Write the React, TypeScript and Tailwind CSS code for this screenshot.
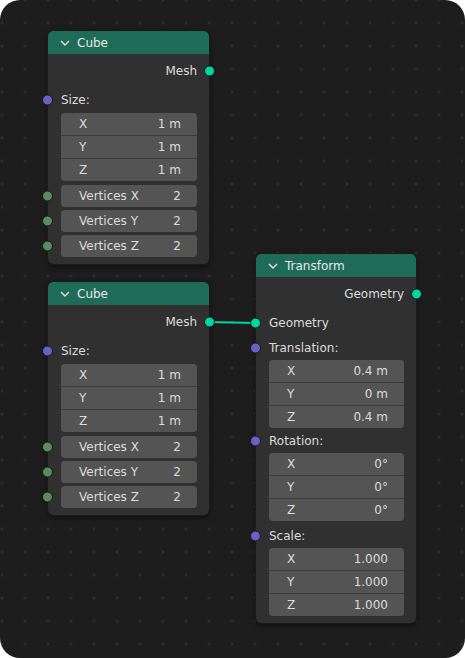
import React from "react";

type Row = { label: string; value: string };

const SOCKET = {
    geo: "bg-[#00d6a3]",
    vec: "bg-[#6363c7]",
    int: "bg-[#598c5c]",
};

const Socket: React.FC<{ color: string; side: "left" | "right" }> = ({ color, side }) => (
    <span
        className={`absolute top-1/2 -translate-y-1/2 w-[11px] h-[11px] rounded-full border border-[#1a1a1a] ${color} ${
            side === "left" ? "left-[-6px]" : "right-[-6px]"
        }`}
    />
);

const Header: React.FC<{ title: string }> = ({ title }) => (
    <div className="h-[23px] bg-[#1e6c58] rounded-t-[5px] flex items-center pl-[12px] gap-[7px] text-[12px] text-[#e8e8e8]">
        <svg width="10" height="8" viewBox="0 0 10 8">
            <path d="M1 2 L5 6 L9 2" stroke="#e0e0e0" strokeWidth="1.4" fill="none" />
        </svg>
        <span>{title}</span>
    </div>
);

const OutputRow: React.FC<{ label: string; color: string; className?: string }> = ({ label, color, className }) => (
    <div className={`relative h-[22px] flex items-center justify-end pr-[12px] ${className ?? ""}`}>
        <span>{label}</span>
        <Socket color={color} side="right" />
    </div>
);

const InputLabel: React.FC<{ label: string; color: string; className?: string }> = ({ label, color, className }) => (
    <div className={`relative h-[22px] flex items-center pl-[13px] ${className ?? ""}`}>
        <span>{label}</span>
        <Socket color={color} side="left" />
    </div>
);

const VectorBox: React.FC<{ rows: Row[]; className?: string }> = ({ rows, className }) => (
    <div className={`ml-[13px] mr-[12px] rounded-[4px] overflow-hidden bg-[#3d3d3d] flex flex-col gap-[1px] ${className ?? ""}`}>
        {rows.map((r) => (
            <div key={r.label} className="h-[22px] bg-[#545454] flex items-center justify-between pl-[18px] pr-[16px]">
                <span>{r.label}</span>
                <span>{r.value}</span>
            </div>
        ))}
    </div>
);

const IntField: React.FC<{ label: string; value: string; className?: string }> = ({ label, value, className }) => (
    <div className={`relative h-[22px] pl-[13px] pr-[12px] ${className ?? ""}`}>
        <Socket color={SOCKET.int} side="left" />
        <div className="h-full rounded-[4px] bg-[#545454] flex items-center justify-between pl-[18px] pr-[16px]">
            <span>{label}</span>
            <span>{value}</span>
        </div>
    </div>
);

const CubeNode: React.FC<{ className: string }> = ({ className }) => (
    <div className={`absolute w-[161px] rounded-[5px] bg-[#303030] shadow-[0_2px_6px_rgba(0,0,0,0.6)] outline outline-1 outline-[#1a1a1a] ${className}`}>
        <Header title="Cube" />
        <div className="flex flex-col pb-[7px]">
            <OutputRow label="Mesh" color={SOCKET.geo} className="mt-[6px]" />
            <InputLabel label="Size:" color={SOCKET.vec} className="mt-[7px]" />
            <VectorBox
                className="mt-[2px]"
                rows={[
                    { label: "X", value: "1 m" },
                    { label: "Y", value: "1 m" },
                    { label: "Z", value: "1 m" },
                ]}
            />
            <IntField label="Vertices X" value="2" className="mt-[4px]" />
            <IntField label="Vertices Y" value="2" className="mt-[3px]" />
            <IntField label="Vertices Z" value="2" className="mt-[3px]" />
        </div>
    </div>
);

const TransformNode: React.FC = () => (
    <div className="absolute left-[256px] top-[254px] w-[160px] rounded-[5px] bg-[#303030] shadow-[0_2px_6px_rgba(0,0,0,0.6)] outline outline-1 outline-[#1a1a1a]">
        <Header title="Transform" />
        <div className="flex flex-col pb-[7px]">
            <OutputRow label="Geometry" color={SOCKET.geo} className="mt-[6px]" />
            <InputLabel label="Geometry" color={SOCKET.geo} className="mt-[7px]" />
            <InputLabel label="Translation:" color={SOCKET.vec} className="mt-[3px]" />
            <VectorBox
                className="mt-[1px]"
                rows={[
                    { label: "X", value: "0.4 m" },
                    { label: "Y", value: "0 m" },
                    { label: "Z", value: "0.4 m" },
                ]}
            />
            <InputLabel label="Rotation:" color={SOCKET.vec} className="mt-[2px]" />
            <VectorBox
                className="mt-[1px]"
                rows={[
                    { label: "X", value: "0°" },
                    { label: "Y", value: "0°" },
                    { label: "Z", value: "0°" },
                ]}
            />
            <InputLabel label="Scale:" color={SOCKET.vec} className="mt-[4px]" />
            <VectorBox
                className="mt-[1px]"
                rows={[
                    { label: "X", value: "1.000" },
                    { label: "Y", value: "1.000" },
                    { label: "Z", value: "1.000" },
                ]}
            />
        </div>
    </div>
);

const App: React.FC = () => {
    return (
        <div className="w-[465px] h-[658px] bg-white">
            <div className="relative w-full h-full rounded-[20px] overflow-hidden bg-[#1d1d1d] bg-[radial-gradient(circle,#303030_1px,transparent_1.6px)] bg-[size:23px_23px] bg-[position:13.5px_11.5px] font-['DejaVu_Sans',sans-serif] text-[12px] text-[#dcdcdc]">
                {/* link Mesh -> Geometry */}
                <svg className="absolute left-0 top-0" width="465" height="658">
                    <path d="M208 322 L256 323" stroke="#00d6a3" strokeWidth="2" fill="none" />
                </svg>
                <CubeNode className="left-[48px] top-[31px]" />
                <CubeNode className="left-[48px] top-[282px]" />
                <TransformNode />
            </div>
        </div>
    );
};

export default App;
